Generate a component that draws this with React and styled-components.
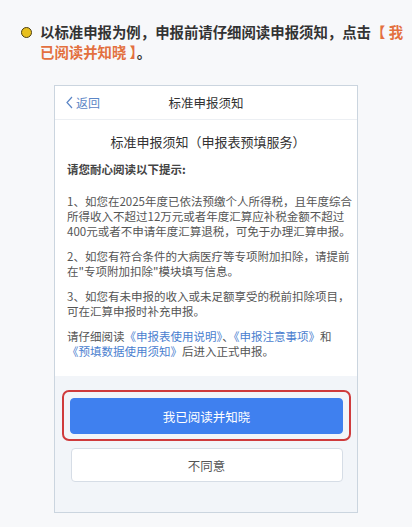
import React from "react";
import styled, { createGlobalStyle } from "styled-components";

const GlobalStyle = createGlobalStyle`
  html, body {
    margin: 0;
    padding: 0;
    background: #f7f8fa;
  }
  body {
    font-family: "Noto Sans CJK SC", "Noto Sans", sans-serif;
  }
`;

const Page = styled.div`
  width: 412px;
  height: 527px;
  overflow: hidden;
  background: #f7f8fa;
`;

const Step = styled.div`
  display: flex;
  align-items: flex-start;
  gap: 8px;
  padding: 22px 2px 0 21px;
`;

const Dot = styled.span`
  flex: none;
  width: 9px;
  height: 9px;
  margin-top: 5px;
  border-radius: 50%;
  background: #e8c01e;
  border: 1.5px solid #4d3f12;
`;

const StepText = styled.p`
  margin: 0;
  font-size: 14.4px;
  line-height: 20px;
  font-weight: 700;
  color: #333;
`;

const Hl = styled.span`
  color: #e3703f;
`;

const Frame = styled.div`
  width: 302px;
  margin: 23px auto 0;
  border: 1.5px solid #cbd5df;
  background: #f2f5f9;
`;

const Header = styled.div`
  position: relative;
  height: 33px;
  display: flex;
  align-items: center;
  justify-content: center;
  background: #fff;
  border-bottom: 1px solid #eceff3;
`;

const Back = styled.span`
  position: absolute;
  left: 11px;
  top: 0;
  bottom: 0;
  display: flex;
  align-items: center;
  gap: 3px;
  font-size: 12px;
  color: #5b86c6;
`;

const HeaderTitle = styled.span`
  font-size: 12.5px;
  color: #333;
`;

const Body = styled.div`
  background: #fff;
  padding: 12px 8px 17px 12px;
`;

const Heading = styled.h3`
  margin: 0;
  text-align: center;
  font-size: 13px;
  line-height: 20px;
  font-weight: 400;
  color: #333;
`;

const Prompt = styled.p`
  margin: 10px 0 17px;
  font-size: 11.5px;
  line-height: 15px;
  font-weight: 700;
  color: #444;
`;

const Para = styled.p`
  margin: 0 0 10px;
  font-size: 11.5px;
  line-height: 15px;
  color: #555;
  white-space: nowrap;
  &:last-child {
    margin-bottom: 0;
  }
`;

const Link = styled.span`
  color: #4a80cf;
`;

const Footer = styled.div`
  display: flex;
  flex-direction: column;
  gap: 7px;
  padding: 14px 6px 30px 7px;
`;

const Marked = styled.div`
  border: 2px solid #cf3b3c;
  border-radius: 7px;
  padding: 6px 6px 5px 6px;
`;

const Button = styled.button`
  display: block;
  width: ${(p) => p.$w || "100%"};
  height: ${(p) => (p.$primary ? "36px" : "34px")};
  margin: 0 auto;
  border-radius: 4px;
  border: 1px solid ${(p) => (p.$primary ? "#3f80ef" : "#d6dde6")};
  background: ${(p) => (p.$primary ? "#3f80ef" : "#fff")};
  color: ${(p) => (p.$primary ? "#fff" : "#555")};
  font-family: "Noto Sans CJK SC", "Noto Sans", sans-serif;
  font-size: 12.5px;
`;

const App = () => {
  return (
    <Page>
      <GlobalStyle />
      <Step>
        <Dot />
        <StepText>
          以标准申报为例，申报前请仔细阅读申报须知，点击<Hl>【 我已阅读并知晓 】</Hl>。
        </StepText>
      </Step>
      <Frame>
        <Header>
          <Back>
            <svg width="7" height="13" viewBox="0 0 7 13">
              <path d="M6 1 L1 6.5 L6 12" fill="none" stroke="#5b86c6" strokeWidth="1.2" />
            </svg>
            返回
          </Back>
          <HeaderTitle>标准申报须知</HeaderTitle>
        </Header>
        <Body>
          <Heading>标准申报须知（申报表预填服务）</Heading>
          <Prompt>请您耐心阅读以下提示:</Prompt>
          <Para>
            1、如您在2025年度已依法预缴个人所得税，且年度综合
            <br />
            所得收入不超过12万元或者年度汇算应补税金额不超过
            <br />
            400元或者不申请年度汇算退税，可免于办理汇算申报。
          </Para>
          <Para>
            2、如您有符合条件的大病医疗等专项附加扣除，请提前
            <br />
            在"专项附加扣除"模块填写信息。
          </Para>
          <Para>
            3、如您有未申报的收入或未足额享受的税前扣除项目，
            <br />
            可在汇算申报时补充申报。
          </Para>
          <Para>
            请仔细阅读<Link>《申报表使用说明》</Link>、<Link>《申报注意事项》</Link>和
            <br />
            <Link>《预填数据使用须知》</Link>后进入正式申报。
          </Para>
        </Body>
        <Footer>
          <Marked>
            <Button $primary>我已阅读并知晓</Button>
          </Marked>
          <Button $w="272px">不同意</Button>
        </Footer>
      </Frame>
    </Page>
  );
};

export default App;
